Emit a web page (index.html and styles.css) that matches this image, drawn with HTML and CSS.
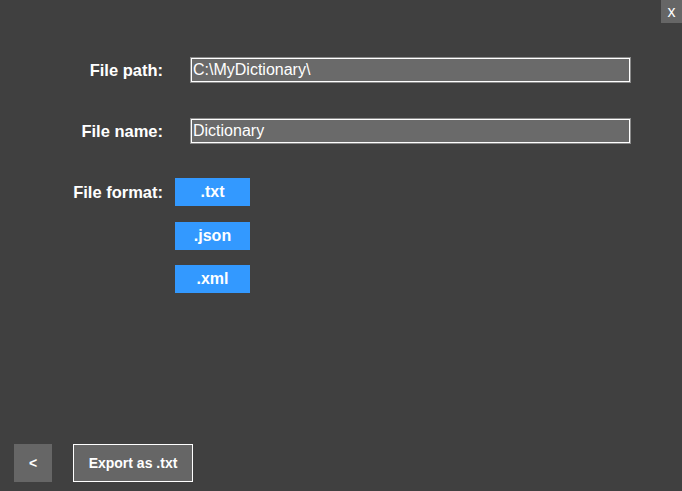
FILE: index.html
```html
<!DOCTYPE html>
<html>
<head>
<meta charset="utf-8">
<link rel="stylesheet" href="styles.css">
</head>
<body>
<div class="app">
  <button class="close">x</button>
  <div class="form">
    <div class="row row-path">
      <span class="label">File path:</span>
      <input class="field" type="text" value="C:\MyDictionary\">
    </div>
    <div class="row row-name">
      <span class="label">File name:</span>
      <input class="field" type="text" value="Dictionary">
    </div>
    <div class="row row-format">
      <span class="label label-format">File format:</span>
      <div class="formats">
        <button class="fmt">.txt</button>
        <button class="fmt">.json</button>
        <button class="fmt">.xml</button>
      </div>
    </div>
  </div>
  <div class="bottom">
    <button class="back">&lt;</button>
    <button class="export">Export as .txt</button>
  </div>
</div>
</body>
</html>
```

FILE: styles.css
```css
html, body {
  margin: 0;
  padding: 0;
  background: #404040;
}
.app {
  position: relative;
  width: 682px;
  height: 491px;
  display: flex;
  flex-direction: column;
  font-family: "Liberation Sans", Arial, sans-serif;
  color: #fff;
  box-sizing: border-box;
}
button {
  font-family: "Liberation Sans", Arial, sans-serif;
  color: #fff;
  border: none;
  padding: 0;
  margin: 0;
  cursor: pointer;
}
.close {
  position: absolute;
  top: 0;
  right: 0;
  width: 21px;
  height: 23px;
  background: #666666;
  font-size: 16px;
  line-height: 23px;
  text-align: center;
}
.form {
  padding-top: 58px;
  display: flex;
  flex-direction: column;
}
.row {
  display: flex;
  align-items: center;
}
.row-name {
  margin-top: 37px;
}
.row-format {
  margin-top: 35px;
  align-items: flex-start;
}
.label {
  width: 163px;
  text-align: right;
  font-weight: bold;
  font-size: 16.5px;
  margin-right: 12px;
  flex: none;
}
.label-format {
  line-height: 28px;
}
.field {
  margin: 0 0 0 16px;
  width: 439px;
  height: 24px;
  box-sizing: border-box;
  border: 1px solid #ffffff;
  box-shadow: 0 0 0 1px #8a8a8a;
  background: #6a6a6a;
  color: #ffffff;
  font-family: "Liberation Sans", Arial, sans-serif;
  font-size: 16px;
  padding: 0 1px;
  outline: none;
}
.formats {
  display: flex;
  flex-direction: column;
  gap: 15.5px;
}
.fmt {
  width: 75px;
  height: 28px;
  background: #3399ff;
  font-weight: bold;
  font-size: 16px;
}
.bottom {
  margin-top: auto;
  display: flex;
  gap: 21px;
  padding: 0 0 9px 14px;
}
.back {
  width: 38px;
  height: 38px;
  background: #666666;
  font-weight: bold;
  font-size: 14px;
}
.export {
  height: 38px;
  width: 120px;
  box-sizing: border-box;
  background: #666666;
  border: 1px solid #ffffff;
  font-weight: bold;
  font-size: 14px;
}
```
